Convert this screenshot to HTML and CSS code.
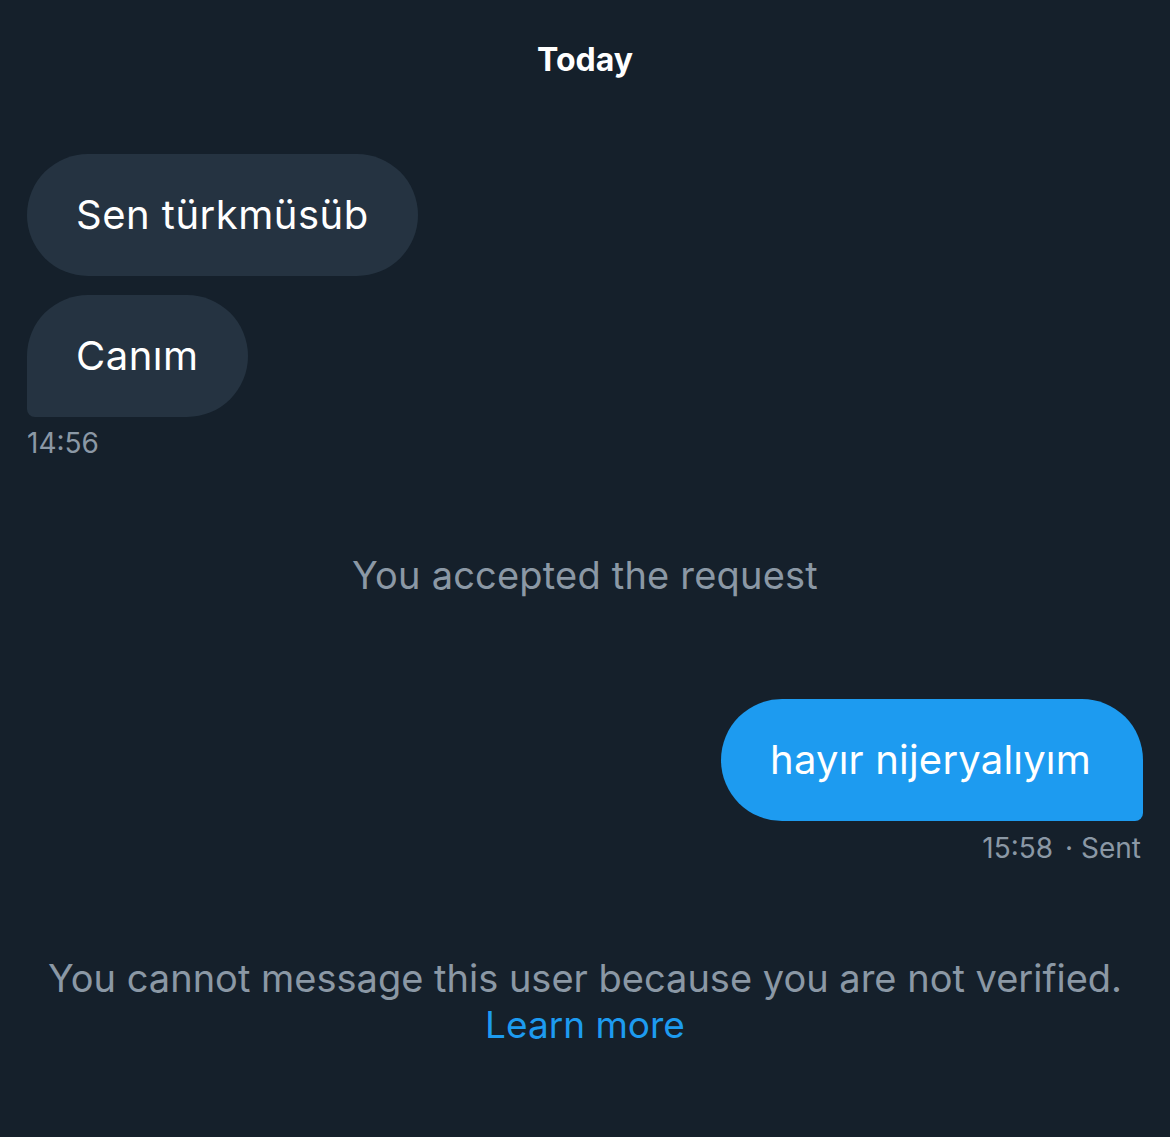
FILE: index.html
```html
<!DOCTYPE html>
<html>
<head>
<meta charset="utf-8">
<link rel="stylesheet" href="styles.css">
</head>
<body>
<main class="chat">
  <div class="day">Today</div>
  <div class="row in">
    <div class="bubble recv">Sen türkmüsüb</div>
  </div>
  <div class="row in second">
    <div class="bubble recv last">Canım</div>
  </div>
  <div class="meta left">14:56</div>
  <div class="notice">You accepted the request</div>
  <div class="row out">
    <div class="bubble sent">hayır nijeryalıyım</div>
  </div>
  <div class="meta right">15:58 <span class="dot">· Sent</span></div>
  <div class="footer">
    <div>You cannot message this user because you are not verified.</div>
    <a class="learn" href="#">Learn more</a>
  </div>
</main>
</body>
</html>
```
FILE: styles.css
```css
html, body {
  margin: 0;
  padding: 0;
  background: #15202b;
}
body {
  font-family: Inter, "Helvetica Neue", Arial, sans-serif;
  color: #ffffff;
  height: 1137px;
  overflow: hidden;
}
.chat {
  display: flex;
  flex-direction: column;
  padding: 0 27px;
}
.day {
  margin-top: 40px;
  height: 40px;
  line-height: 40px;
  text-align: center;
  font-size: 32px;
  font-weight: 700;
}
.row {
  display: flex;
}
.row.in {
  justify-content: flex-start;
  margin-top: 74px;
}
.row.in.second {
  margin-top: 19px;
}
.row.out {
  justify-content: flex-end;
  margin-top: 102px;
}
.bubble {
  font-size: 40px;
  letter-spacing: 0.5px;
  line-height: 46px;
  padding: 38px 49px;
  border-radius: 61px;
}
.bubble.recv {
  background: #253341;
}
.bubble.recv.last {
  border-bottom-left-radius: 8px;
}
.bubble.sent {
  background: #1d9bf0;
  border-bottom-right-radius: 8px;
  padding-right: 52px;
  letter-spacing: 0.2px;
}
.meta {
  font-size: 28px;
  line-height: 32px;
  color: #8b98a5;
  margin-top: 10px;
}
.meta.right {
  text-align: right;
  margin-top: 11px;
  padding-right: 2px;
}
.dot {
  margin-left: 4px;
}
.notice {
  margin-top: 94px;
  text-align: center;
  font-size: 38px;
  letter-spacing: 0.2px;
  line-height: 44px;
  color: #8b98a5;
}
.footer {
  margin-top: 91px;
  text-align: center;
  font-size: 38px;
  line-height: 46px;
  color: #8b98a5;
}
.learn {
  color: #1d9bf0;
  text-decoration: none;
  font-size: 37px;
}
```
